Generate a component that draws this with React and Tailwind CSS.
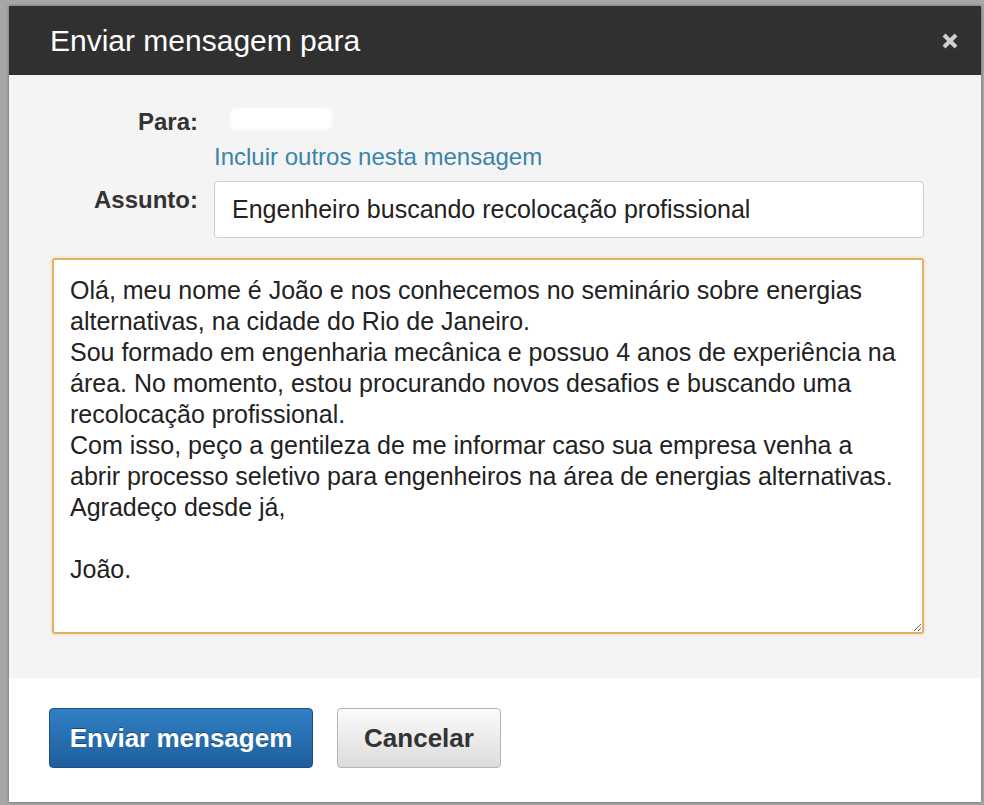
import React from "react";

const message = `Olá, meu nome é João e nos conhecemos no seminário sobre energias
alternativas, na cidade do Rio de Janeiro.
Sou formado em engenharia mecânica e possuo 4 anos de experiência na
área. No momento, estou procurando novos desafios e buscando uma
recolocação profissional.
Com isso, peço a gentileza de me informar caso sua empresa venha a
abrir processo seletivo para engenheiros na área de energias alternativas.
Agradeço desde já,

João.`;

function CloseIcon() {
  return (
    <svg width="18" height="16" viewBox="0 0 18 16" className="block">
      <path d="M3 2 L15 14 M15 2 L3 14" stroke="#d0d0d0" strokeWidth="4" strokeLinecap="butt" />
    </svg>
  );
}

export default function App() {
  return (
    <div className="min-h-[805px] bg-[#a6a6a6] pt-[6px] pl-[9px] pr-[3px] pb-[3px] font-['Liberation_Sans',Arial,sans-serif]">
      <div className="w-[972px] flex flex-col shadow-[0_0_3px_rgba(0,0,0,0.4)]">
        {/* header */}
        <div className="h-[69px] bg-[#303030] flex items-center justify-between pl-[41px] pr-[22px]">
          <h1 className="text-[30px] text-white leading-none">Enviar mensagem para</h1>
          <CloseIcon />
        </div>

        {/* body */}
        <div className="bg-[#f4f4f4] pl-[43px] pr-[57px] pt-[35px] pb-[44px]">
          <div className="grid grid-cols-[146px_1fr] gap-x-[16px]">
            <div className="text-right text-[24px] font-bold text-[#333] leading-[24px]">Para:</div>
            <div className="h-[24px] relative">
              <div className="absolute left-[16px] top-[-2px] w-[102px] h-[22px] bg-white rounded-[6px] blur-[1px]" />
            </div>
            <div />
            <a href="#" className="mt-[11px] text-[24px] leading-[24px] text-[#3a84a8]">Incluir outros nesta mensagem</a>
            <div className="mt-[12px] pt-[7px] text-right text-[24px] font-bold text-[#333] leading-[24px]">
              Assunto:
            </div>
            <div className="mt-[12px] h-[57px] bg-white border border-[#cfcfcf] rounded-[4px] flex items-center pl-[17px] text-[25px] text-[#222]">
              Engenheiro buscando recolocação profissional
            </div>
          </div>
          <textarea
            readOnly
            wrap="off"
            defaultValue={message}
            className="mt-[20px] block w-full h-[376px] bg-white border-2 border-[#e2b262] rounded-[3px] shadow-[0_0_3px_rgba(230,170,80,0.5)] pl-[16px] pt-[15px] pr-[10px] text-[25px] leading-[31px] text-[#222] overflow-hidden outline-none font-['Liberation_Sans',Arial,sans-serif]"
          />
        </div>

        {/* footer */}
        <div className="bg-white h-[124px] flex items-start gap-[24px] pl-[40px] pt-[30px]">
          <button className="h-[60px] w-[264px] rounded-[4px] border border-[#1c5186] bg-gradient-to-b from-[#3080c4] to-[#1f5e9c] text-white text-[26px] font-bold [text-shadow:0_-1px_0_rgba(0,0,0,0.35)]">
            Enviar mensagem
          </button>
          <button className="h-[60px] w-[164px] rounded-[4px] border border-[#b4b4b4] bg-gradient-to-b from-[#fbfbfb] to-[#dcdcdc] text-[#333] text-[26px] font-bold">
            Cancelar
          </button>
        </div>
      </div>
    </div>
  );
}
